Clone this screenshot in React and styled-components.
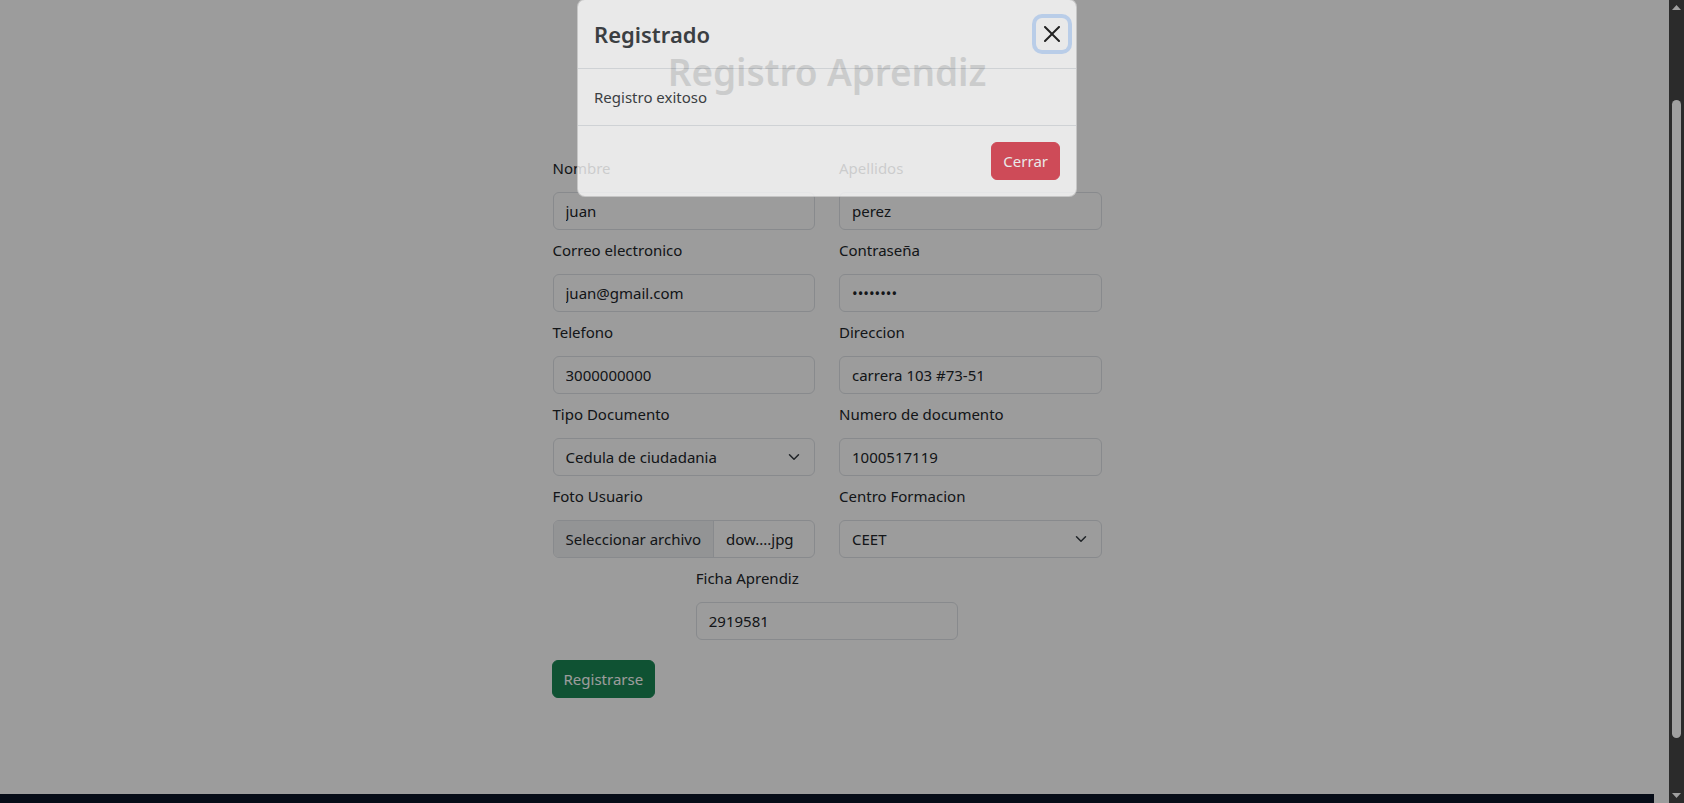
import React from "react";
import styled, { createGlobalStyle } from "styled-components";

const GlobalStyle = createGlobalStyle`
  *, *::before, *::after { box-sizing: border-box; }
  html, body {
    margin: 0;
    padding: 0;
    width: 1684px;
    height: 803px;
    overflow: hidden;
    background: #fff;
  }
  body {
    font-family: "Noto Sans", "Segoe UI", Roboto, sans-serif;
    font-size: 15px;
    line-height: 24px;
    color: #212529;
  }
`;

const Screen = styled.div`
  display: flex;
  width: 1684px;
  height: 803px;
`;

const Viewport = styled.div`
  position: relative;
  flex: 1;
  display: flex;
  background: #fff;
  overflow: hidden;
`;

const Main = styled.div`
  width: 1654px;
  display: flex;
  flex-direction: column;
`;

const Gutter = styled.div`
  width: 15px;
  background: #fff;
`;

const PageBody = styled.main`
  flex: 1;
  padding-top: 48px;
  display: flex;
  flex-direction: column;
  align-items: center;
`;

const FooterBar = styled.footer`
  height: 9px;
  background: #0b1426;
`;

const PageTitle = styled.h1`
  margin: 0 0 60px;
  font-size: 37px;
  line-height: 48px;
  font-weight: 600;
  letter-spacing: -0.1px;
  text-align: center;
`;

const Form = styled.form`
  width: 549px;
  display: grid;
  grid-template-columns: 1fr 1fr;
  column-gap: 24px;
`;

const Field = styled.div`
  display: flex;
  flex-direction: column;
  padding-bottom: 8px;
  ${(p) =>
    p.$centered &&
    `
    grid-column: 1 / -1;
    justify-self: center;
    width: calc((100% - 24px) / 2);
  `}
`;

const Label = styled.label`
  display: block;
  line-height: 24px;
  margin-bottom: 12px;
`;

const controlBase = `
  height: 38px;
  width: 100%;
  border: 1px solid #dee2e6;
  border-radius: 6px;
  background: #fff;
  color: #212529;
  font: inherit;
  font-size: 15px;
  line-height: 24px;
`;

const TextInput = styled.input`
  ${controlBase}
  display: block;
  padding: 6px 12px;
  outline: none;
`;

const SelectBox = styled.div`
  ${controlBase}
  display: flex;
  align-items: center;
  justify-content: space-between;
  padding: 6px 12px;
`;

const ChevronWrap = styled.span`
  width: 16px;
  height: 12px;
  display: flex;
  align-items: center;
  justify-content: center;
`;

const FileBox = styled.div`
  ${controlBase}
  display: flex;
  overflow: hidden;
`;

const FileButton = styled.span`
  padding: 6px 12px;
  background: #f1f2f3;
  border-right: 1px solid #dee2e6;
  white-space: nowrap;
`;

const FileName = styled.span`
  padding: 6px 12px;
  white-space: nowrap;
`;

const Button = styled.button`
  display: inline-block;
  padding: 6px 11px;
  font: inherit;
  font-size: 15px;
  line-height: 24px;
  color: #fff;
  background: ${(p) => p.$bg};
  border: 1px solid ${(p) => p.$bg};
  border-radius: 6px;
  cursor: pointer;
`;

const SubmitButton = styled(Button)`
  grid-column: 1 / -1;
  justify-self: start;
  margin-top: 12px;
  margin-left: -1px;
`;

const Backdrop = styled.div`
  position: absolute;
  inset: 0;
  background: rgba(0, 0, 0, 0.39);
`;

const ModalLayer = styled.div`
  position: absolute;
  top: 0;
  left: 0;
  width: 1654px;
  display: flex;
  justify-content: center;
`;

const ModalContent = styled.div`
  width: 500px;
  background: #fff;
  border: 1px solid rgba(0, 0, 0, 0.175);
  border-radius: 8px;
  opacity: 0.78;
  margin-top: -1px;
`;

const ModalHeader = styled.div`
  display: flex;
  align-items: center;
  padding: 16px;
  border-bottom: 1px solid #dee2e6;
`;

const ModalTitle = styled.h5`
  margin: 0;
  font-size: 22px;
  line-height: 36px;
  font-weight: 600;
`;

const CloseButton = styled.button`
  width: 32px;
  height: 32px;
  margin: -8px -8px -8px auto;
  padding: 8px;
  border: 0;
  border-radius: 6px;
  background: transparent;
  box-shadow: 0 0 0 4px rgba(13, 110, 253, 0.25);
  display: flex;
  align-items: center;
  justify-content: center;
  color: #000;
`;

const ModalBody = styled.div`
  padding: 16px;
`;

const BodyText = styled.p`
  margin: 0;
`;

const ModalFooter = styled.div`
  display: flex;
  justify-content: flex-end;
  padding: 12px;
  border-top: 1px solid #dee2e6;
`;

const FooterButton = styled(Button)`
  margin: 4px;
`;

const Scrollbar = styled.div`
  width: 15px;
  background: #2b2b2b;
  display: flex;
  flex-direction: column;
  align-items: center;
`;

const ArrowBox = styled.div`
  height: 15px;
  width: 15px;
  display: flex;
  align-items: center;
  justify-content: center;
`;

const Track = styled.div`
  flex: 1;
  width: 100%;
  padding-top: 85px;
  display: flex;
  justify-content: center;
`;

const Thumb = styled.div`
  width: 9px;
  height: 638px;
  border-radius: 5px;
  background: #a0a0a0;
`;

const Chevron = () => (
  <ChevronWrap>
    <svg width="12" height="12" viewBox="0 0 16 16" fill="none">
      <path
        d="m2 5 6 6 6-6"
        stroke="#343a40"
        strokeWidth="2"
        strokeLinecap="round"
        strokeLinejoin="round"
      />
    </svg>
  </ChevronWrap>
);

const CloseIcon = () => (
  <svg width="16" height="16" viewBox="0 0 16 16" fill="currentColor">
    <path d="M.293.293a1 1 0 0 1 1.414 0L8 6.586 14.293.293a1 1 0 1 1 1.414 1.414L9.414 8l6.293 6.293a1 1 0 0 1-1.414 1.414L8 9.414l-6.293 6.293a1 1 0 0 1-1.414-1.414L6.586 8 .293 1.707a1 1 0 0 1 0-1.414" />
  </svg>
);

const fields = [
  [
    { label: "Nombre", value: "juan" },
    { label: "Apellidos", value: "perez" },
  ],
  [
    { label: "Correo electronico", value: "juan@gmail.com", type: "email" },
    { label: "Contraseña", value: "12345678", type: "password" },
  ],
  [
    { label: "Telefono", value: "3000000000" },
    { label: "Direccion", value: "carrera 103 #73-51" },
  ],
  [
    { label: "Tipo Documento", value: "Cedula de ciudadania", kind: "select" },
    { label: "Numero de documento", value: "1000517119" },
  ],
  [
    { label: "Foto Usuario", value: "dow....jpg", kind: "file" },
    { label: "Centro Formacion", value: "CEET", kind: "select" },
  ],
];

const renderControl = (f) => {
  if (f.kind === "select") {
    return (
      <SelectBox role="combobox">
        <span>{f.value}</span>
        <Chevron />
      </SelectBox>
    );
  }
  if (f.kind === "file") {
    return (
      <FileBox>
        <FileButton>Seleccionar archivo</FileButton>
        <FileName>{f.value}</FileName>
      </FileBox>
    );
  }
  return <TextInput type={f.type || "text"} value={f.value} readOnly />;
};

export default function App() {
  return (
    <>
      <GlobalStyle />
      <Screen>
        <Viewport>
          <Main>
            <PageBody>
              <PageTitle>Registro Aprendiz</PageTitle>
              <Form onSubmit={(e) => e.preventDefault()}>
                {fields.flat().map((f) => (
                  <Field key={f.label}>
                    <Label>{f.label}</Label>
                    {renderControl(f)}
                  </Field>
                ))}
                <Field $centered>
                  <Label>Ficha Aprendiz</Label>
                  <TextInput type="text" value="2919581" readOnly />
                </Field>
                <SubmitButton type="submit" $bg="#198754">
                  Registrarse
                </SubmitButton>
              </Form>
            </PageBody>
            <FooterBar />
          </Main>
          <Gutter />
          <Backdrop />
          <ModalLayer>
            <ModalContent role="dialog">
              <ModalHeader>
                <ModalTitle>Registrado</ModalTitle>
                <CloseButton aria-label="Close">
                  <CloseIcon />
                </CloseButton>
              </ModalHeader>
              <ModalBody>
                <BodyText>Registro exitoso</BodyText>
              </ModalBody>
              <ModalFooter>
                <FooterButton $bg="#dc3545">Cerrar</FooterButton>
              </ModalFooter>
            </ModalContent>
          </ModalLayer>
        </Viewport>
        <Scrollbar>
          <ArrowBox>
            <svg width="9" height="5" viewBox="0 0 9 5">
              <path d="M4.5 0 9 5H0z" fill="#a0a0a0" />
            </svg>
          </ArrowBox>
          <Track>
            <Thumb />
          </Track>
          <ArrowBox>
            <svg width="9" height="5" viewBox="0 0 9 5">
              <path d="M0 0h9L4.5 5z" fill="#a0a0a0" />
            </svg>
          </ArrowBox>
        </Scrollbar>
      </Screen>
    </>
  );
}
